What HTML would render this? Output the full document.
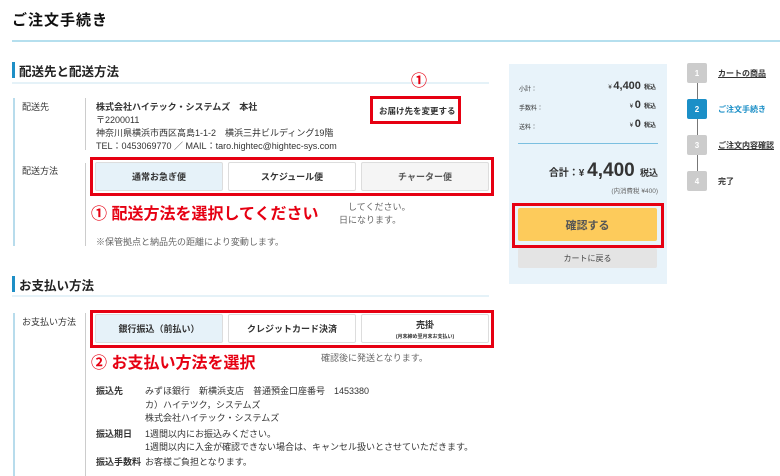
<!DOCTYPE html>
<html><head><meta charset="utf-8"><style>
*{margin:0;padding:0;box-sizing:border-box}
body{width:780px;height:476px;background:#fff;font-family:"Liberation Sans","Noto Sans CJK JP",sans-serif;color:#333;position:relative;overflow:hidden;font-size:9px}
.a{position:absolute;white-space:nowrap}
.b{font-weight:bold}
.btn{position:absolute;border:1px solid #ddd;border-radius:2px;background:#fff;display:flex;align-items:center;justify-content:center;font-weight:bold;font-size:9px;flex-direction:column}
.red{position:absolute;border:3px solid #e60012}
.rt{position:absolute;color:#e60012;font-weight:bold;white-space:nowrap}
.step{position:absolute;left:687px;width:20px;height:20px;background:#ccc;color:#fff;font-size:8px;display:flex;align-items:center;justify-content:center;border-radius:2px;font-weight:bold}
</style></head><body>
<div class="a b" style="left:12px;top:9px;font-size:15px;color:#111;letter-spacing:1px">ご注文手続き</div>
<div class="a" style="left:12px;top:40px;width:768px;height:2px;background:#b5dfee"></div>

<div class="a" style="left:12px;top:62px;width:3px;height:16px;background:#1e8fc6"></div>
<div class="a b" style="left:19px;top:61px;font-size:12.5px;color:#222">配送先と配送方法</div>
<div class="a" style="left:12px;top:82px;width:477px;height:2px;background:#e5f2f8"></div>
<div class="a" style="left:13px;top:98px;width:2px;height:148px;background:#b8dcec"></div>
<div class="a" style="left:85px;top:98px;width:1px;height:52px;background:#ccc"></div>
<div class="a" style="left:85px;top:163px;width:1px;height:83px;background:#ccc"></div>
<div class="a" style="left:22px;top:100px">配送先</div>
<div class="a b" style="left:96px;top:100px">株式会社ハイテック・システムズ　本社</div>
<div class="a" style="left:96px;top:113px">〒2200011</div>
<div class="a" style="left:96px;top:126px">神奈川県横浜市西区高島1-1-2　横浜三井ビルディング19階</div>
<div class="a" style="left:96px;top:139px">TEL：0453069770 ／ MAIL：taro.hightec@hightec-sys.com</div>
<div class="red" style="left:370px;top:96px;width:91px;height:28px"></div>
<div class="a b" style="left:379px;top:105px;font-size:8.5px">お届け先を変更する</div>
<div class="rt" style="left:411px;top:67px;font-size:16px">①</div>

<div class="a" style="left:22px;top:164px">配送方法</div>
<div class="red" style="left:90px;top:157px;width:404px;height:39px"></div>
<div class="btn" style="left:95px;top:162px;width:128px;height:29px;background:#e6f2f9">通常お急ぎ便</div>
<div class="btn" style="left:228px;top:162px;width:128px;height:29px">スケジュール便</div>
<div class="btn" style="left:361px;top:162px;width:128px;height:29px;background:#f5f5f5;color:#555">チャーター便</div>
<div class="a" style="left:96px;top:200px;color:#666">　　　　　　　　　　　　　　　　　　　　　　　　　　　　してください。</div>
<div class="a" style="left:96px;top:213px;color:#666">　　　　　　　　　　　　　　　　　　　　　　　　　　　日になります。</div>
<div class="rt" style="left:91px;top:200px;font-size:16px">① 配送方法を選択してください</div>
<div class="a" style="left:96px;top:235px;color:#666">※保管拠点と納品先の距離により変動します。</div>

<div class="a" style="left:12px;top:276px;width:3px;height:16px;background:#1e8fc6"></div>
<div class="a b" style="left:19px;top:275px;font-size:12.5px;color:#222">お支払い方法</div>
<div class="a" style="left:12px;top:295px;width:477px;height:2px;background:#e5f2f8"></div>
<div class="a" style="left:13px;top:313px;width:2px;height:163px;background:#b8dcec"></div>
<div class="a" style="left:85px;top:313px;width:1px;height:163px;background:#ccc"></div>
<div class="a" style="left:22px;top:315px">お支払い方法</div>
<div class="red" style="left:90px;top:310px;width:404px;height:38px"></div>
<div class="btn" style="left:95px;top:314px;width:128px;height:29px;background:#e6f2f9">銀行振込（前払い）</div>
<div class="btn" style="left:228px;top:314px;width:128px;height:29px">クレジットカード決済</div>
<div class="btn" style="left:361px;top:314px;width:128px;height:29px">売掛<span style="font-size:5px;margin-top:2px">(月末締め翌月末お支払い)</span></div>
<div class="a" style="left:96px;top:351px;color:#666">　　　　　　　　　　　　　　　　　　　　　　　　　確認後に発送となります。</div>
<div class="rt" style="left:91px;top:349px;font-size:16px">② お支払い方法を選択</div>
<div class="a b" style="left:96px;top:384px">振込先</div>
<div class="a" style="left:145px;top:384px">みずほ銀行　新横浜支店　普通預金口座番号　1453380</div>
<div class="a" style="left:145px;top:398px">カ）ハイテツク，システムズ</div>
<div class="a" style="left:145px;top:411px">株式会社ハイテック・システムズ</div>
<div class="a b" style="left:96px;top:427px">振込期日</div>
<div class="a" style="left:145px;top:427px">1週間以内にお振込みください。</div>
<div class="a" style="left:145px;top:440px">1週間以内に入金が確認できない場合は、キャンセル扱いとさせていただきます。</div>
<div class="a b" style="left:96px;top:455px">振込手数料</div>
<div class="a" style="left:145px;top:455px">お客様ご負担となります。</div>

<div class="a" style="left:509px;top:64px;width:158px;height:220px;background:#e8f3fa"></div>
<div class="a" style="left:519px;top:84px;font-size:6px">小計：</div>
<div class="a" style="left:519px;top:103px;font-size:6px">手数料：</div>
<div class="a" style="left:519px;top:122px;font-size:6px">送料：</div>
<div class="a b" style="right:124px;top:80px;font-size:11px"><span style="font-size:6px;font-weight:normal">¥ </span>4,400 <span style="font-size:6px">税込</span></div>
<div class="a b" style="right:124px;top:99px;font-size:11px"><span style="font-size:6px;font-weight:normal">¥ </span>0 <span style="font-size:6px">税込</span></div>
<div class="a b" style="right:124px;top:118px;font-size:11px"><span style="font-size:6px;font-weight:normal">¥ </span>0 <span style="font-size:6px">税込</span></div>
<div class="a" style="left:518px;top:143px;width:140px;height:1px;background:#7bbfe0"></div>
<div class="a b" style="right:122px;top:160px;font-size:19px"><span style="font-size:10px">合計：¥ </span>4,400 <span style="font-size:9px">税込</span></div>
<div class="a" style="right:122px;top:185px;font-size:6.5px;color:#666">(内消費税 ¥400)</div>
<div class="red" style="left:512px;top:203px;width:152px;height:45px"></div>
<div class="a" style="left:518px;top:208px;width:139px;height:33px;background:#fdcb5b;border-radius:2px;display:flex;align-items:center;justify-content:center;font-weight:bold;font-size:11px;color:#555">確認する</div>
<div class="a" style="left:518px;top:248px;width:139px;height:20px;background:#e4e4e4;border-radius:2px;display:flex;align-items:center;justify-content:center;font-size:8px;color:#444">カートに戻る</div>

<div class="a" style="left:697px;top:70px;width:1px;height:110px;background:#777"></div>
<div class="step" style="top:63px">1</div>
<div class="step" style="top:99px;background:#1b8fc7">2</div>
<div class="step" style="top:135px">3</div>
<div class="step" style="top:171px">4</div>
<div class="a b" style="left:718px;top:68px;font-size:8px;text-decoration:underline">カートの商品</div>
<div class="a b" style="left:718px;top:104px;font-size:8px;color:#1b8fc7">ご注文手続き</div>
<div class="a b" style="left:718px;top:140px;font-size:8px;text-decoration:underline">ご注文内容確認</div>
<div class="a b" style="left:718px;top:176px;font-size:8px">完了</div>
</body></html>
